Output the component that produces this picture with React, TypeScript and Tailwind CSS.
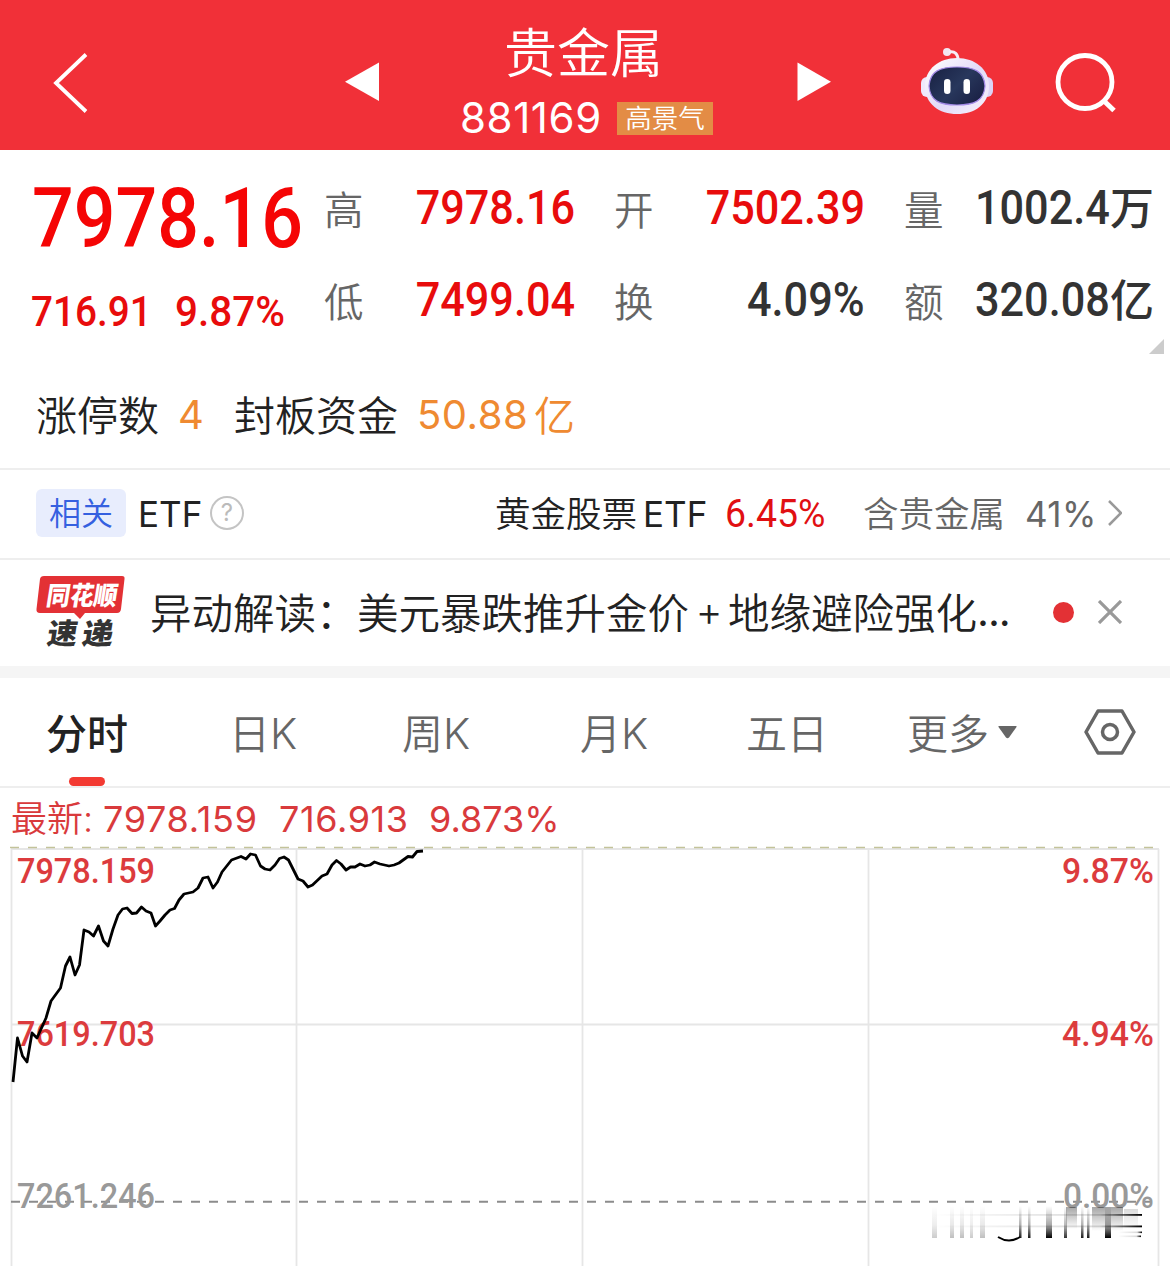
import React from 'react';

type Quote = {
  label: string;
  value: string;
  unit?: string;
  red?: boolean;
}

const quotes: Quote[] = [
  {label: '高', value: '7978.16', red: true},
  {label: '开', value: '7502.39', red: true},
  {label: '量', value: '1002.4', unit: '万'},
  {label: '低', value: '7499.04', red: true},
  {label: '换', value: '4.09%'},
  {label: '额', value: '320.08', unit: '亿'},
];

const tabs = [
  {name: '日K', width: 'w-[173px]'},
  {name: '周K', width: 'w-[178px]'},
  {name: '月K', width: 'w-[166px]'},
  {name: '五日', width: 'w-[161px]'},
];

const pricePoints = [
  [13, 1082], [17.5, 1038], [22.5, 1056], [27, 1062], [32, 1033], [37, 1038], [46, 1018], [51, 1001],
  [60.5, 988], [65.5, 966], [70, 957], [75, 975], [79.5, 965], [84, 930], [89, 932], [93.5, 936],
  [98.5, 926], [103.5, 941], [108, 946], [113, 929], [118, 915], [122.5, 909], [127, 908], [132, 913.5],
  [136.5, 913], [141.5, 907], [146, 911], [151, 913], [155.5, 926], [160, 921], [165, 915], [170, 910],
  [174.5, 908.5], [179, 900], [184, 894], [193, 892], [198, 888], [203, 878], [208, 877], [213, 888],
  [217.5, 882], [222, 872], [231.5, 860], [241, 856.5], [246, 859], [250.5, 854], [255.5, 855],
  [260.5, 866], [265, 869], [270, 870], [275, 865], [279.5, 858.5], [284, 857], [288.5, 860],
  [298, 879], [303, 881], [308, 887], [312.5, 885], [322, 876], [327, 874], [332, 865], [336.5, 860.5],
  [341, 864], [346, 870], [350.5, 867], [355, 867], [360, 864], [365, 866], [370, 865], [374.5, 862],
  [380, 864], [389, 866], [394, 865], [399, 863], [408, 856.5], [412.5, 857], [417, 851.5], [423, 851],
];

const Robot = () => (
  <svg className="h-[68px] w-[74px]" viewBox="0 0 74 68" fill="none">
    <defs>
      <linearGradient id="shell" x1="10" y1="10" x2="64" y2="66" gradientUnits="userSpaceOnUse">
        <stop stopColor="#fff"/>
        <stop offset=".55" stopColor="#e2daf8"/>
        <stop offset="1" stopColor="#f6f0fc"/>
      </linearGradient>
      <linearGradient id="visor" x1="18" y1="20" x2="56" y2="58" gradientUnits="userSpaceOnUse">
        <stop stopColor="#1b2447"/>
        <stop offset=".5" stopColor="#28375c"/>
        <stop offset="1" stopColor="#1a2145"/>
      </linearGradient>
    </defs>
    <circle cx="27" cy="5" r="4" fill="#f3e6f0"/>
    <path d="M29 5c6-1 9 2 9 8" stroke="#f7ecf5" strokeWidth="3"/>
    <rect x="1" y="30" width="12" height="20" rx="6" fill="#efe9fc"/>
    <rect x="61" y="30" width="12" height="20" rx="6" fill="#dcd3f6"/>
    <path d="M37 11C55 11 69 22 69 39C69 57 55 67 37 67C19 67 5 57 5 39C5 22 19 11 37 11Z" fill="url(#shell)"/>
    <path
      d="M37 20C54 20 64 24 65 39C64 54 54 58 37 58C20 58 10 54 9 39C10 24 20 20 37 20Z"
      fill="url(#visor)" stroke="#a38ae6" strokeWidth="1.2"/>
    <rect x="24" y="32" width="6.5" height="15" rx="3.25" fill="#fff"/>
    <rect x="43.5" y="32" width="6.5" height="15" rx="3.25" fill="#fff"/>
  </svg>
)

const Header = () => (
  <header className="h-[150px] bg-[#f13038] text-white flex">
    <div className="w-[345px] pl-[52px] pt-[52px]">
      <svg className="h-[62px] w-[36px]" viewBox="0 0 36 62" fill="none">
        <path d="M34 2.5L4 31L34 59.5" stroke="#fff" strokeWidth="3.8"/>
      </svg>
    </div>
    <svg className="mt-[62px] h-[40px] w-[34px]" viewBox="0 0 34 40"><path d="M34 0.5V39L0 19.7Z" fill="#fff"/></svg>
    <div className="w-[418px] pl-[81px] pt-[16px]">
      <h1 className="ml-[44px] text-[53px] leading-[68px] font-[350]">贵金属</h1>
      <div className="mt-0.5 flex items-center h-[63px]">
        <span className="w-[157px] font-[Inter] text-[42px] font-normal leading-[63px] tracking-[0.6px] whitespace-nowrap">881169</span>
        <span className="mt-px flex h-[33px] w-[96px] items-center justify-center bg-[#e38c45] pb-0.5 text-[26.5px] font-[350] leading-none">高景气</span>
      </div>
    </div>
    <svg className="mt-[62px] h-[40px] w-[34px]" viewBox="0 0 34 40"><path d="M0.5 0.5V39L34 19.7Z" fill="#fff"/></svg>
    <div className="pl-[89px] pt-[47px]"><Robot/></div>
    <svg className="ml-[61px] mt-[52px] h-[62px] w-[62px]" viewBox="0 0 62 62" fill="none">
      <ellipse cx="30" cy="30" rx="27" ry="26.5" stroke="#fff" strokeWidth="4.8"/>
      <path d="M48.5 48.5L59 58.5" stroke="#fff" strokeWidth="5"/>
    </svg>
  </header>
)

const QuotePanel = () => (
  <section className="relative flex h-[220px]">
    <div className="w-[325px] pl-[31px] pt-[21px] font-[Roboto] font-medium text-[#f50505] whitespace-nowrap">
      <div className="ml-px h-[96px] w-[302px] origin-left scale-x-[0.885] text-[83px] leading-[96px]">7978.16</div>
      <div className="mt-[19px] flex h-[50px] text-[43px] leading-[50px] text-[#e80c0c]">
        <span className="w-[144px] origin-left scale-x-[0.9]">716.91</span>
        <span className="origin-left scale-x-[0.94]">9.87%</span>
      </div>
    </div>
    <div className="grid h-[196px] grid-cols-[250px_250px_249px] grid-rows-[92px_92px] gap-x-10 pt-3">
      {quotes.map(({label, value, unit, red}) => (
        <div key={label} className="flex items-center justify-between whitespace-nowrap">
          <span className="-ml-px text-[39.5px] font-[350] text-[#666]">{label}</span>
          <span className={red ? 'flex items-center text-[#e80c0c]' : 'flex items-center text-[#333]'}>
            <span className="origin-right scale-x-[0.9] font-[Roboto] text-[48px] font-medium">{value}</span>
            {unit && <span className="-mt-1 text-[44px] font-medium">{unit}</span>}
          </span>
        </div>
      ))}
    </div>
    <svg className="absolute right-[6px] top-[189px] h-[15px] w-[15px]" viewBox="0 0 16 16"><path d="M16 0V16H0Z" fill="#ccc"/></svg>
  </section>
)

const LimitUp = () => (
  <section className="flex h-[100px] items-center border-b-2 border-[#eee] pb-[9px] pl-9 text-[41px] font-[350] text-[#222] whitespace-nowrap">
    <span className="-mt-0.5 w-[142px]">涨停数</span>
    <span className="w-[56px] font-[Inter] text-[40px] font-normal text-[#ef8a31]">4</span>
    <span className="-mt-0.5 w-[183px]">封板资金</span>
    <span className="w-[117px] font-[Inter] text-[40px] font-normal tracking-[0.5px] text-[#ef8a31]">50.88</span>
    <span className="-mt-0.5 text-[#ef8a31]">亿</span>
  </section>
)

const RelatedEtf = () => (
  <section className="flex h-[90px] items-center border-b-2 border-[#eee] pb-0.5 pl-9 text-[35.5px] font-[350] text-[#222] whitespace-nowrap">
    <span className="mr-3 flex h-[48px] w-[90px] items-center justify-center rounded-md bg-[#e8edfd] pb-1 text-[32px] text-[#3560e0]">相关</span>
    <span className="mt-0.5 w-[72px] font-[Inter] text-[35px] font-normal">ETF</span>
    <span className="flex size-[34px] items-center justify-center rounded-full border-[2.5px] border-[#c4c4c4] font-[Inter] text-[24px] font-normal text-[#bbb]">?</span>
    <span className="-mt-0.5 ml-[251px] w-[148px]">黄金股票</span>
    <span className="mt-0.5 w-[82px] font-[Inter] text-[35px] font-normal">ETF</span>
    <span className="mt-0.5 w-[138px] origin-left scale-x-[0.96] font-[Roboto] text-[39px] font-normal text-[#e10f12]">6.45%</span>
    <span className="-mt-0.5 w-[162px] text-[#666]">含贵金属</span>
    <span className="mt-0.5 w-[83px] font-[Inter] text-[35px] font-normal tracking-[0.4px] text-[#666]">41%</span>
    <svg className="h-[26px] w-[14px]" viewBox="0 0 14 26" fill="none"><path d="M1 1L13 13L1 25" stroke="#999" strokeWidth="2.5"/></svg>
  </section>
)

const NewsLogo = () => (
  <svg className="h-[76px] w-[90px]" viewBox="0 0 90 76">
    <path d="M8 1H86Q89 1 88.5 4L85 34Q84.5 38 81 38H49L44 44L38 38H4Q0 38 0.5 34L4 4Q4.5 1 8 1Z" fill="#e33135"/>
    <g fontWeight="900" transform="skewX(-9)">
      <text x="14" y="30" fontSize="26" fill="#fff" textLength="71" lengthAdjust="spacingAndGlyphs">同花顺</text>
      <text x="21" y="69" fontSize="29" fill="#333" textLength="30" lengthAdjust="spacingAndGlyphs">速</text>
      <text x="56" y="69" fontSize="29" fill="#333" textLength="31" lengthAdjust="spacingAndGlyphs">递</text>
    </g>
  </svg>
)

const News = () => (
  <section className="flex h-[118px] items-center border-b-[12px] border-[#f5f5f5] pl-9 text-[#222]">
    <NewsLogo/>
    <p className="-mt-1 ml-6 flex w-[903px] text-[41.5px] font-[350] whitespace-nowrap">
      <span className="w-[207px]">异动解读：</span>
      <span className="w-[333px]">美元暴跌推升金价</span>
      <span className="flex w-[38px] items-center justify-center font-[Inter]">+</span>
      <span>地缘避险强化</span>
      <span className="font-[Inter] font-normal tracking-tight">...</span>
    </p>
    <span className="-mt-0.5 size-[21px] rounded-full bg-[#e33135]"/>
    <svg className="-mt-0.5 ml-6 size-6" viewBox="0 0 24 24"><path d="M1 1L23 23M23 1L1 23" stroke="#999" strokeWidth="3.2"/></svg>
  </section>
)

const Tabs = () => (
  <nav className="flex h-[110px] items-center border-b-2 border-[#eee] pl-[46px] text-[41px] font-[350] text-[#666] whitespace-nowrap">
    <div className="relative flex h-full w-[183px] items-center font-medium text-[#222]">
      <span>分时</span>
      <span className="absolute bottom-0 left-[23px] h-[9px] w-[36px] rounded-full bg-[#f33a32]"/>
    </div>
    {tabs.map(({name, width}) => (
      <div key={name} className={`${width} flex items-center`}>
        <span>{name.replace('K', '')}</span>
        {name.endsWith('K') && <span className="mt-0.5 font-[Inter] text-[42px]">K</span>}
      </div>
    ))}
    <span className="w-[91px]">更多</span>
    <svg className="h-[13px] w-[19px]" viewBox="0 0 19 13"><path d="M1 0H18Q19 0 18.5 1L11 11.5Q9.5 13 8 11.5L0.5 1Q0 0 1 0Z" fill="#666"/></svg>
    <svg className="ml-[67px] h-[48px] w-[52px]" viewBox="0 0 52 48" fill="none" stroke="#666" strokeWidth="3.5">
      <path d="M14 3H38L50 24L38 45H14L2 24Z" strokeLinejoin="round"/>
      <circle cx="26" cy="24" r="7.5"/>
    </svg>
  </nav>
)

const ghostBars = [
  {x: 932, w: 5, o: 0.2}, {x: 950, w: 4, o: 0.25}, {x: 960, w: 4, o: 0.25}, {x: 970, w: 3, o: 0.2}, {x: 980, w: 5, o: 0.25},
  {x: 1019, w: 2.5, o: 0.9}, {x: 1028, w: 2.5, o: 0.9}, {x: 1046, w: 6, o: 1}, {x: 1064, w: 3, o: 0.8},
  {x: 1081, w: 2.5, o: 0.9}, {x: 1087, w: 2.5, o: 0.9}, {x: 1105, w: 6, o: 1},
]

const Chart = () => (
  <svg className="block h-[420px] w-full" viewBox="0 846 1170 420" fill="none">
    <defs>
      <linearGradient id="fade" x1="0" y1="0" x2="0" y2="1">
        <stop stopColor="#000" stopOpacity="0"/>
        <stop offset=".6" stopColor="#000" stopOpacity=".35"/>
        <stop offset="1" stopColor="#000"/>
      </linearGradient>
      <linearGradient id="haze" x1="0" y1="0" x2="0" y2="1">
        <stop stopColor="#000" stopOpacity=".35"/>
        <stop offset="1" stopColor="#000" stopOpacity="0"/>
      </linearGradient>
      <linearGradient id="streak" x1="0" y1="0" x2="1" y2="0">
        <stop stopColor="#000" stopOpacity="0"/>
        <stop offset=".8" stopColor="#000" stopOpacity=".15"/>
        <stop offset="1" stopColor="#000"/>
      </linearGradient>
    </defs>
    <path d="M11 849H1159M11 1024.5H1159M11.5 849V1266M296.5 849V1266M582.5 849V1266M868.5 849V1266M1158.5 849V1266" stroke="#e6e6e6" strokeWidth="1.8"/>
    <path d="M10 847.5H1158" stroke="#c3c39a" strokeWidth="1.3" strokeDasharray="9 9"/>
    <path d="M11 1201.7H1152" stroke="#8c8c8c" strokeWidth="2" strokeDasharray="9 9"/>
    <g fontFamily="Roboto" fontSize="35" fontWeight="500" fill="#dc3b3d">
      <text x="17" y="883" textLength="138" lengthAdjust="spacingAndGlyphs">7978.159</text>
      <text x="17" y="1045.5" textLength="138" lengthAdjust="spacingAndGlyphs">7619.703</text>
      <text x="1062" y="883" textLength="92" lengthAdjust="spacingAndGlyphs">9.87%</text>
      <text x="1062" y="1045.5" textLength="92" lengthAdjust="spacingAndGlyphs">4.94%</text>
      <text x="17" y="1208" textLength="138" lengthAdjust="spacingAndGlyphs" fill="#999">7261.246</text>
      <text x="1063" y="1208" textLength="91" lengthAdjust="spacingAndGlyphs" fill="#999">0.00%</text>
    </g>
    <polyline points={pricePoints.map(p => p.join(',')).join(' ')} stroke="#000" strokeWidth="2.8" strokeLinejoin="round"/>
    {ghostBars.map(({x, w, o}) => <rect key={x} x={x} y="1206" width={w} height="32" fill="url(#fade)" opacity={o}/>)}
    <path d="M998 1237Q1009 1244 1020 1237" stroke="#000" strokeWidth="2"/>
    <rect x="1066" y="1207" width="11" height="22" fill="url(#haze)"/>
    <rect x="1092" y="1207" width="12" height="24" fill="url(#haze)"/>
    <rect x="1104" y="1207" width="19" height="24" fill="url(#haze)"/>
    <rect x="1124" y="1209" width="14" height="20" fill="url(#haze)" opacity=".4"/>
    <rect x="932" y="1214" width="210" height="1.8" fill="url(#streak)"/>
    <rect x="932" y="1225.5" width="210" height="1.8" fill="url(#streak)"/>
    <rect x="1118" y="1231.5" width="24" height="1.6" fill="url(#streak)"/>
    <rect x="1118" y="1235.5" width="23" height="1.6" fill="url(#streak)"/>
  </svg>
)

const App = () => {
  return (
    <div className="h-[1266px] w-[1170px] overflow-hidden bg-white font-['Noto_Sans_CJK_SC',sans-serif]">
      <Header/>
      <QuotePanel/>
      <LimitUp/>
      <RelatedEtf/>
      <News/>
      <Tabs/>
      <div className="flex h-[58px] items-center pl-[11px] pt-1 text-[36px] leading-none font-[350] text-[#d93a3c] whitespace-nowrap">
        <span className="-mt-1 w-[92px]">最新<span className="font-[Inter]">:</span></span>
        <span className="w-[176px] font-[Inter] font-normal tracking-[0.7px]">7978.159</span>
        <span className="w-[150px] font-[Inter] font-normal tracking-[0.6px]">716.913</span>
        <span className="font-[Inter] font-normal">9.873%</span>
      </div>
      <Chart/>
    </div>
  );
};

export default App;
